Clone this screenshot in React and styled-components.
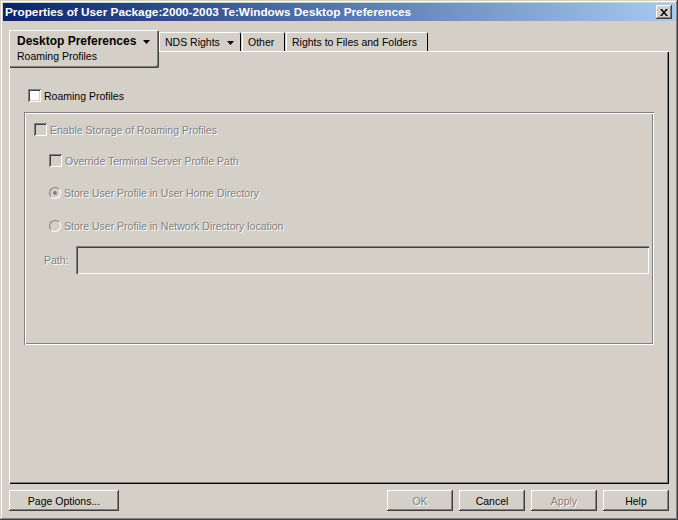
import React from 'react';
import styled, { createGlobalStyle } from 'styled-components';

const GlobalStyle = createGlobalStyle`
  body {
    margin: 0;
    background: #d4d0c8;
    font-family: 'Liberation Sans', Arial, sans-serif;
    font-size: 10.5px;
  }
  * { box-sizing: border-box; }
`;

const face = '#d4d0c8';

const Window = styled.div`
  width: 678px;
  height: 520px;
  background: ${face};
  padding: 3px;
  display: flex;
  flex-direction: column;
  box-shadow: inset -1px -1px #404040, inset 1px 1px ${face},
    inset -2px -2px #808080, inset 2px 2px #fff;
`;

const TitleBar = styled.div`
  height: 18px;
  display: flex;
  align-items: center;
  justify-content: space-between;
  padding: 0 3px 0 2px;
  background: linear-gradient(to right, #0a246a, #a6caf0);
  color: #fff;
  font-weight: bold;
  font-size: 11.8px;
  white-space: nowrap;
`;

const CloseButton = styled.div`
  width: 16px;
  height: 14px;
  background: ${face};
  display: flex;
  align-items: center;
  justify-content: center;
  box-shadow: inset -1px -1px #404040, inset 1px 1px #fff,
    inset -2px -2px #808080, inset 2px 2px ${face};
`;

const TabRow = styled.div`
  display: flex;
  align-items: flex-end;
  height: 21px;
  margin-top: 9px;
  padding-left: 6px;
  position: relative;
  z-index: 1;
`;

const Tab = styled.div`
  width: ${(p) => p.$width}px;
  height: ${(p) => (p.$selected ? 38 : 19)}px;
  margin-bottom: ${(p) => (p.$selected ? -17 : 0)}px;
  margin-right: ${(p) => (p.$selected ? 0 : 1)}px;
  padding: ${(p) => (p.$selected ? '4px 0 0 8px' : '3px 0 0 6px')};
  background: ${face};
  border-top-right-radius: 2px;
  border-bottom-right-radius: ${(p) => (p.$selected ? 2 : 0)}px;
  box-shadow: ${(p) =>
    p.$selected
      ? `inset 1px 1px #fff, inset -1px -1px #404040, inset -2px -2px #808080`
      : `inset 1px 1px #fff, inset -1px 0 #000`};
  line-height: 15px;
  white-space: nowrap;
`;

const TabTitle = styled.div`
  display: flex;
  align-items: center;
  font-weight: ${(p) => (p.$bold ? 'bold' : 'normal')};
  font-size: ${(p) => (p.$bold ? 12 : 10.5)}px;
`;

const Arrow = styled.svg`
  margin-left: ${(p) => p.$gap}px;
`;

const Panel = styled.div`
  margin: 0 6px;
  height: 433px;
  position: relative;
  padding: 38px 15px 0 15px;
  box-shadow: inset 1px 1px #fff, inset -1px -1px #000, inset -2px -2px #808080;
`;

const Row = styled.label`
  display: flex;
  align-items: center;
  height: 13px;
  margin-top: ${(p) => p.$top || 0}px;
  margin-left: ${(p) => p.$indent || 0}px;
`;

const Label = styled.span`
  margin-left: 3px;
  color: ${(p) => (p.$disabled ? '#808080' : '#000')};
  text-shadow: ${(p) => (p.$disabled ? '1px 1px #fff' : 'none')};
  white-space: nowrap;
`;

const Check = styled.span`
  width: 13px;
  height: 13px;
  flex: none;
  background: ${(p) => (p.$disabled ? face : '#fff')};
  box-shadow: inset 1px 1px #808080, inset -1px -1px #fff,
    inset 2px 2px #404040, inset -2px -2px ${face};
`;

const Radio = styled.span`
  width: 12px;
  height: 12px;
  flex: none;
  border-radius: 50%;
  border: 1px solid;
  border-color: #808080 #fff #fff #808080;
  background: ${face};
  display: flex;
  align-items: center;
  justify-content: center;
  &::after {
    content: '';
    width: 4px;
    height: 4px;
    border-radius: 50%;
    background: ${(p) => (p.$checked ? '#808080' : 'transparent')};
  }
`;

const Group = styled.div`
  margin-top: 10px;
  height: 233px;
  padding: 11px 5px 0 10px;
  box-shadow: inset 1px 1px #808080, inset 2px 2px #fff,
    inset -1px -1px #fff, inset -2px -2px #808080;
`;

const PathRow = styled.div`
  display: flex;
  align-items: center;
  margin-top: 14px;
  margin-left: 7px;
`;

const PathInput = styled.div`
  flex: 1;
  height: 28px;
  margin-left: 7px;
  background: ${face};
  box-shadow: inset 1px 1px #808080, inset 2px 2px #404040,
    inset -1px -1px #fff, inset -2px -2px ${face};
`;

const ButtonBar = styled.div`
  display: flex;
  align-items: center;
  margin-top: 6px;
  padding: 0 6px;
  gap: 6px;
`;

const Spacer = styled.div`
  flex: 1;
`;

const Button = styled.div`
  width: ${(p) => p.$width}px;
  height: 21px;
  display: flex;
  align-items: center;
  justify-content: center;
  color: ${(p) => (p.$disabled ? '#808080' : '#000')};
  text-shadow: ${(p) => (p.$disabled ? '1px 1px #fff' : 'none')};
  box-shadow: inset -1px -1px #404040, inset 1px 1px #fff,
    inset -2px -2px #808080, inset 2px 2px ${face};
`;

function DownArrow({ gap }) {
  return (
    <Arrow $gap={gap} width="7" height="4" viewBox="0 0 7 4">
      <polygon points="0,0 7,0 3.5,4" fill="#000" />
    </Arrow>
  );
}

export default function App() {
  return (
    <>
      <GlobalStyle />
      <Window>
        <TitleBar>
          <span>Properties of User Package:2000-2003 Te:Windows Desktop Preferences</span>
          <CloseButton>
            <svg width="8" height="7" viewBox="0 0 8 7">
              <path d="M0 0h2l2 2.5L6 0h2L5 3.5 8 7H6L4 4.5 2 7H0l3-3.5z" fill="#000" />
            </svg>
          </CloseButton>
        </TitleBar>

        <TabRow>
          <Tab $selected $width={150}>
            <TabTitle $bold>
              Desktop Preferences
              <DownArrow gap={7} />
            </TabTitle>
            <div>Roaming Profiles</div>
          </Tab>
          <Tab $width={82}>
            <TabTitle>
              NDS Rights
              <DownArrow gap={7} />
            </TabTitle>
          </Tab>
          <Tab $width={43}>
            <TabTitle>Other</TabTitle>
          </Tab>
          <Tab $width={142}>
            <TabTitle>Rights to Files and Folders</TabTitle>
          </Tab>
        </TabRow>

        <Panel>
          <Row $indent={4}>
            <Check />
            <Label>Roaming Profiles</Label>
          </Row>

          <Group>
            <Row>
              <Check $disabled />
              <Label $disabled>Enable Storage of Roaming Profiles</Label>
            </Row>
            <Row $top={18} $indent={15}>
              <Check $disabled />
              <Label $disabled>Override Terminal Server Profile Path</Label>
            </Row>
            <Row $top={19} $indent={15}>
              <Radio $checked />
              <Label $disabled>Store User Profile in User Home Directory</Label>
            </Row>
            <Row $top={20} $indent={15}>
              <Radio />
              <Label $disabled>Store User Profile in Network Directory location</Label>
            </Row>
            <PathRow>
              <Label $disabled>Path:</Label>
              <PathInput />
            </PathRow>
          </Group>
        </Panel>

        <ButtonBar>
          <Button $width={110}>Page Options...</Button>
          <Spacer />
          <Button $width={66} $disabled>OK</Button>
          <Button $width={66}>Cancel</Button>
          <Button $width={66} $disabled>Apply</Button>
          <Button $width={66}>Help</Button>
        </ButtonBar>
      </Window>
    </>
  );
}
